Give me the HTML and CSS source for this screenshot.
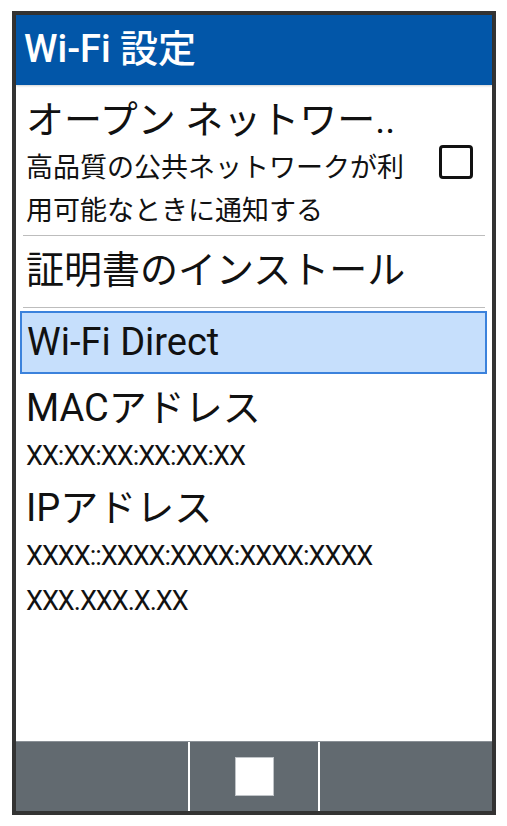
FILE: index.html
```html
<!DOCTYPE html>
<html lang="ja">
<head>
    <meta charset="UTF-8">
    <meta name="viewport" content="width=device-width, initial-scale=1.0">
    <title>Wi-Fi 設定</title>
    <link rel="stylesheet" href="styles.css">
</head>
<body>
    <div class="phone">
        <header class="title-bar">
            <h1>Wi-Fi 設定</h1>
        </header>

        <div class="list">
            <div class="row row-open">
                <div class="row-title">オープン ネットワー..</div>
                <div class="row-sub">
                    <div class="sub-text">高品質の公共ネットワークが利用可能なときに通知する</div>
                    <span class="checkbox"></span>
                </div>
            </div>
            <div class="divider"></div>
            <div class="row row-single">証明書のインストール</div>
            <div class="divider"></div>
            <div class="row row-selected">Wi-Fi Direct</div>
            <div class="row row-info">
                <div class="row-title">MACアドレス</div>
                <div class="info-value">XX:XX:XX:XX:XX:XX</div>
            </div>
            <div class="row row-info row-ip">
                <div class="row-title">IPアドレス</div>
                <div class="info-value small">XXXX::XXXX:XXXX:XXXX:XXXX</div>
                <div class="info-value small">XXX.XXX.X.XX</div>
            </div>
        </div>

        <footer class="soft-keys">
            <div class="key"></div>
            <div class="key key-center"><span class="center-mark"></span></div>
            <div class="key"></div>
        </footer>
    </div>
</body>
</html>
```

FILE: styles.css
```css
body {
    margin: 0;
    padding: 11px 0 0 12px;
    background-color: #ffffff;
    font-family: Roboto, "Noto Sans CJK JP", sans-serif;
    color: #111111;
}
.phone {
    width: 476px;
    height: 796px;
    border: 4px solid #333333;
    display: flex;
    flex-direction: column;
    background-color: #ffffff;
}
.title-bar {
    height: 70px;
    flex: none;
    background-color: #0256a8;
    box-shadow: 0 1px 2px rgba(0, 0, 0, 0.18);
    position: relative;
    z-index: 1;
}
.title-bar h1 {
    margin: 0;
    padding-left: 8px;
    line-height: 68px;
    font-size: 38px;
    font-weight: 500;
    color: #ffffff;
}
.list {
    flex: 1;
}
.row {
    padding-left: 10px;
}
.row-title {
    font-size: 38px;
    line-height: 48px;
    white-space: nowrap;
}
.row-open {
    height: 150px;
    box-sizing: border-box;
    padding-top: 11px;
}
.row-open .row-title {
    line-height: 48px;
}
.row-sub {
    display: flex;
    align-items: flex-start;
    margin-top: 3px;
}
.sub-text {
    width: 392px;
    font-size: 27px;
    line-height: 43px;
}
.checkbox {
    width: 28px;
    height: 28px;
    border: 3.5px solid #111111;
    border-radius: 4px;
    margin: -2px 0 0 21px;
    flex: none;
}
.divider {
    height: 1px;
    background-color: #bdbdbd;
    margin: 0 7px;
}
.row-single {
    font-size: 38px;
    line-height: 68px;
    padding-bottom: 3px;
}
.row-selected {
    margin: 3px 5px 0 4px;
    padding-left: 5px;
    border: 2px solid #3b82dc;
    background-color: #c6dffc;
    font-size: 38px;
    line-height: 59px;
}
.row-info {
    margin-top: 10px;
}
.info-value {
    font-size: 27px;
    line-height: 48px;
    letter-spacing: -1px;
}
.row-ip {
    margin-top: 4px;
}
.row-ip .row-title {
    margin-bottom: 2px;
}
.info-value.small {
    line-height: 45px;
}
.soft-keys {
    height: 70px;
    flex: none;
    display: flex;
    gap: 2px;
    background-color: #ffffff;
    border-top: 1px solid #8a9096;
    box-sizing: border-box;
}
.key {
    flex: 0 0 172px;
    background-color: #626a70;
}
.key-center {
    flex: 0 0 128px;
    display: flex;
    justify-content: center;
    align-items: center;
}
.center-mark {
    width: 39px;
    height: 39px;
    background-color: #ffffff;
    border: 1px solid #c0c4c8;
    box-sizing: border-box;
}
```
